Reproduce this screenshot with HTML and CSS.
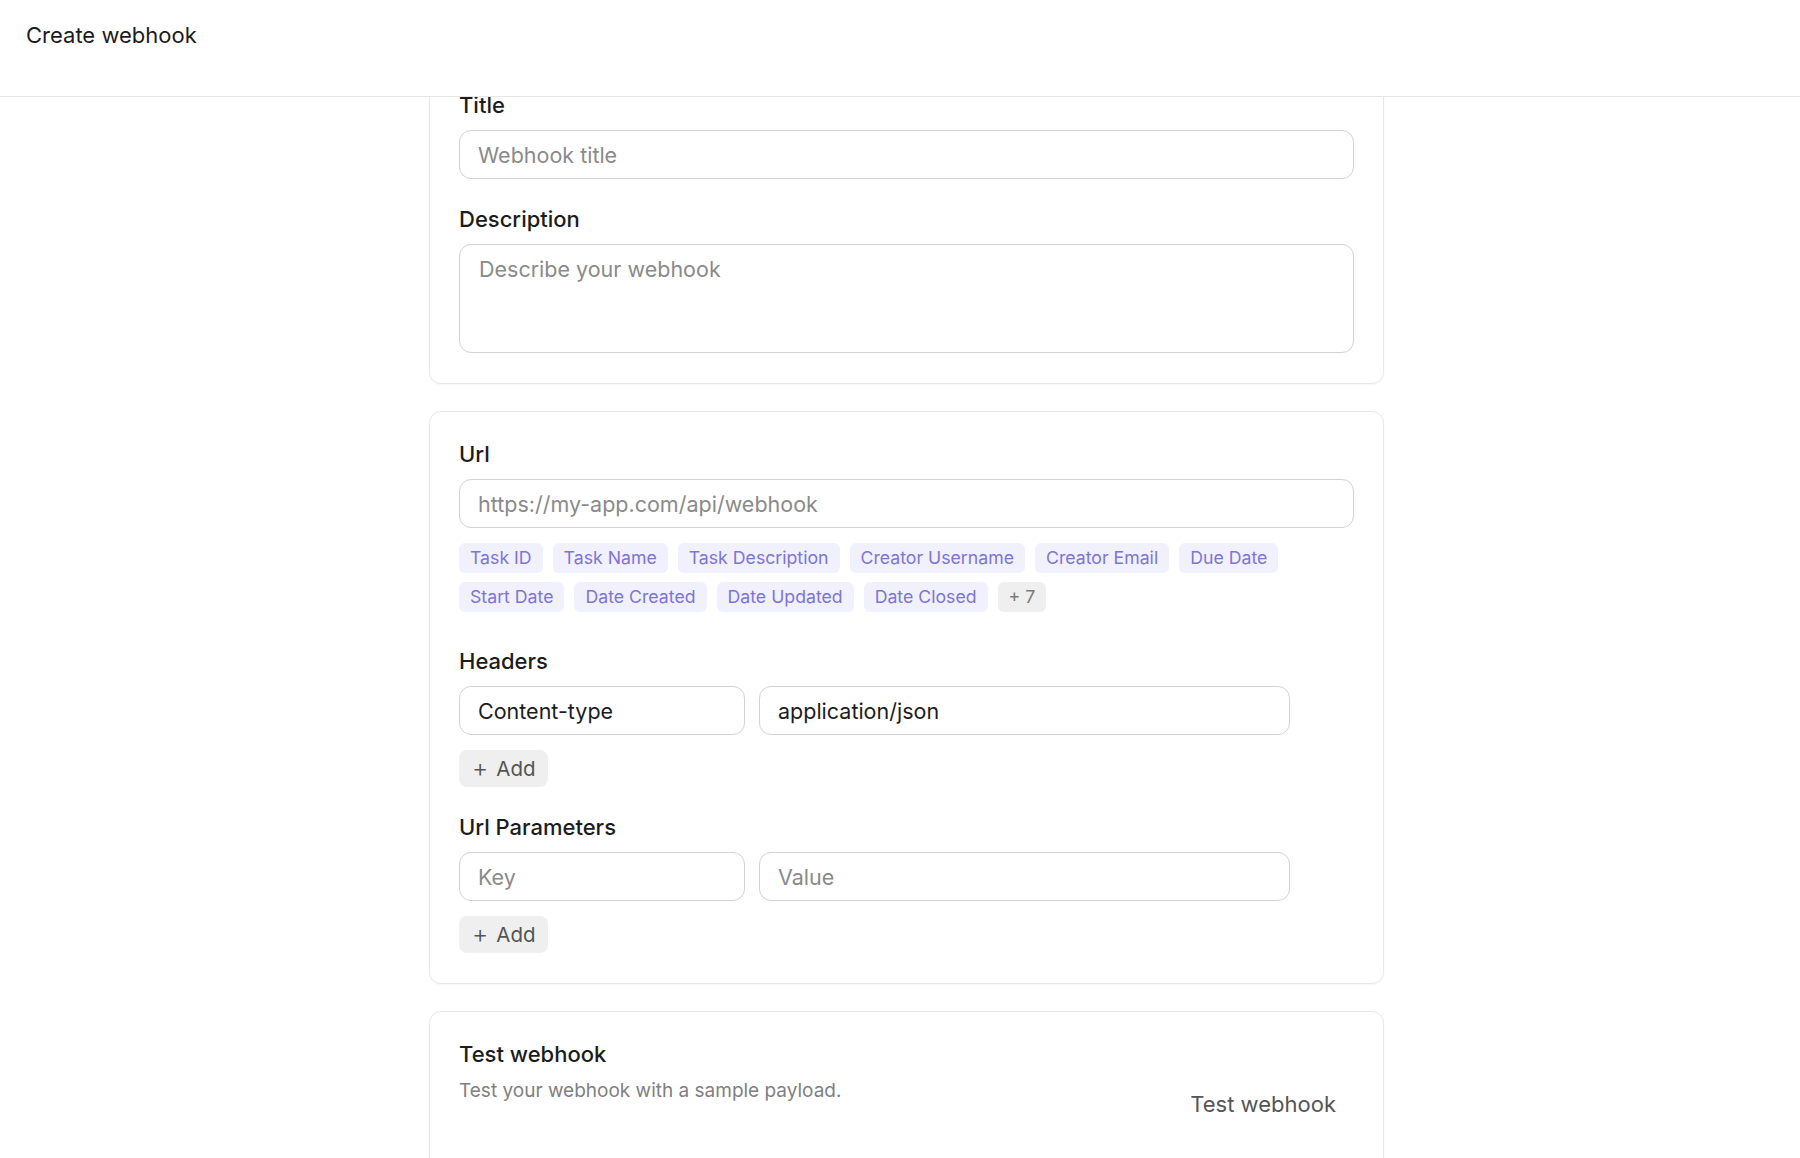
FILE: index.html
```html
<!DOCTYPE html>
<html>
	<head>
		<meta charset="UTF-8">
		<title>Create webhook</title>
		<link rel="stylesheet" href="styles.css">
	</head>
	<body>
		<div class="topbar">
			<h1>Create webhook</h1>
		</div>
		<div class="main">
			<div class="column">
				<!-- general -->
				<div class="card">
					<div class="field">
						<label>Title</label>
						<input type="text" placeholder="Webhook title">
					</div>
					<div class="field">
						<label>Description</label>
						<textarea placeholder="Describe your webhook"></textarea>
					</div>
				</div>

				<!-- request -->
				<div class="card">
					<div class="field">
						<label>Url</label>
						<input type="text" placeholder="https://my-app.com/api/webhook">
						<div class="tags">
							<span>Task ID</span>
							<span>Task Name</span>
							<span>Task Description</span>
							<span>Creator Username</span>
							<span>Creator Email</span>
							<span>Due Date</span>
							<span>Start Date</span>
							<span>Date Created</span>
							<span>Date Updated</span>
							<span>Date Closed</span>
							<span class="more">+ 7</span>
						</div>
					</div>
					<div class="field">
						<label>Headers</label>
						<div class="pair">
							<input type="text" class="key" value="Content-type">
							<input type="text" class="val" value="application/json">
						</div>
						<button class="add"><i>+</i>Add</button>
					</div>
					<div class="field">
						<label>Url Parameters</label>
						<div class="pair">
							<input type="text" class="key" placeholder="Key">
							<input type="text" class="val" placeholder="Value">
						</div>
						<button class="add"><i>+</i>Add</button>
					</div>
				</div>

				<!-- test -->
				<div class="card test">
					<div class="test-text">
						<label>Test webhook</label>
						<p>Test your webhook with a sample payload.</p>
					</div>
					<button class="ghost">Test webhook</button>
				</div>
			</div>
		</div>
	</body>
</html>
```

FILE: styles.css
```css
*{
	margin: 0;
	padding: 0;
	box-sizing: border-box;
}
html,body{
	height: 100%;
}
body{
	font-family: Inter, "Noto Sans", sans-serif;
	color: #1c1c1c;
	background: #fff;
	overflow: hidden;
}
.topbar{
	height: 97px;
	padding: 21px 26px 0;
	border-bottom: 1px solid #e6e6e6;
	background: #fff;
	position: relative;
	z-index: 2;
}
.topbar h1{
	font-size: 22px;
	line-height: 28px;
	font-weight: 400;
}
.main{
	height: calc(100% - 97px);
	overflow: hidden;
}
.column{
	width: 955px;
	margin: -35px 0 0 429px;
	display: flex;
	flex-direction: column;
	gap: 27px;
}
.card{
	border: 1px solid #e8e8e8;
	border-radius: 12px;
	padding: 29px 29px 30px;
	background: #fff;
	box-shadow: 0 1px 2px rgba(0,0,0,.04);
	display: flex;
	flex-direction: column;
	gap: 27px;
}
.field{
	display: flex;
	flex-direction: column;
}
.field label,.test label{
	display: block;
	font-size: 22px;
	line-height: 26px;
	font-weight: 500;
	margin-bottom: 12px;
}
input,textarea{
	font: 21.5px/28px Inter, "Noto Sans", sans-serif;
	color: #1c1c1c;
	border: 1px solid #d2d2d2;
	border-radius: 12px;
	background: #fff;
	outline: none;
}
input{
	height: 49px;
	padding: 0 18px;
}
textarea{
	height: 109px;
	padding: 10px 19px;
	resize: none;
}
input::placeholder,textarea::placeholder{
	color: #8a8a8a;
}
.tags{
	display: flex;
	flex-wrap: wrap;
	gap: 9px 10px;
	margin-top: 15px;
	margin-bottom: 9px;
	padding-right: 60px;
}
.tags span{
	height: 30px;
	padding: 0 11px;
	border-radius: 6px;
	background: #f1f0fd;
	color: #7d74d6;
	font-size: 17.7px;
	line-height: 30px;
}
.tags span.more{
	background: #efefef;
	color: #7a7a7a;
}
.pair{
	display: flex;
	gap: 14px;
}
.pair .key{
	width: 286px;
}
.pair .val{
	width: 531px;
}
.add{
	align-self: flex-start;
	margin-top: 15px;
	height: 37px;
	padding: 0 12px 0 13px;
	border: none;
	border-radius: 8px;
	background: #efefef;
	color: #555;
	font: 20.5px/37px Inter, "Noto Sans", sans-serif;
	display: flex;
	align-items: center;
	gap: 8px;
}
.add i{
	font-style: normal;
	font-size: 25px;
	font-weight: 300;
}
.card.test{
	flex-direction: row;
	justify-content: space-between;
	align-items: flex-start;
	height: 200px;
}
.test p{
	font-size: 19px;
	line-height: 24px;
	color: #808080;
}
.ghost{
	margin-top: 39px;
	height: 48px;
	padding: 0 18px;
	border: none;
	background: none;
	color: #555;
	font: 22px/48px Inter, "Noto Sans", sans-serif;
}
```
